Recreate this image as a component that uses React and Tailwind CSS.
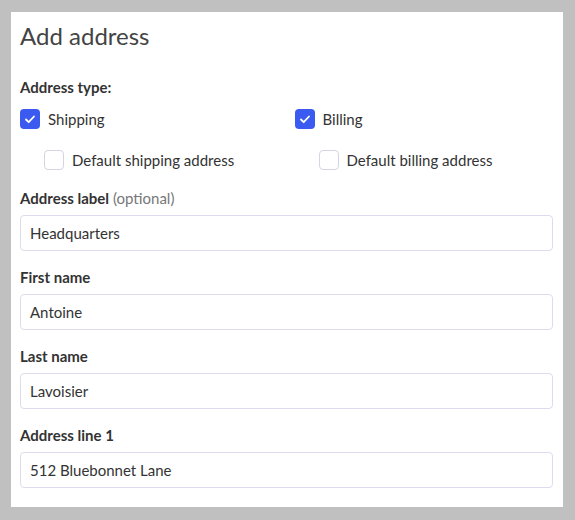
export default function App() {
  const Check = ({ on }) =>
    on ? (
      <span className="w-5 h-5 rounded-[4px] bg-[#3b5bf0] flex items-center justify-center shrink-0">
        <svg width="14" height="14" viewBox="0 0 14 14"><path d="M3 7.5l2.7 2.7L11 4.5" fill="none" stroke="white" strokeWidth="1.8" strokeLinecap="round" strokeLinejoin="round"/></svg>
      </span>
    ) : (
      <span className="w-5 h-5 rounded-[4px] border border-[#d4d4e4] bg-white shrink-0" />
    );
  const Field = ({ label, opt, value }) => (
    <div className="mt-[16px] first:mt-0">
      <div className="text-[15px] font-bold text-[#333] leading-5">
        {label}
        {opt && <span className="font-normal text-[#777]"> (optional)</span>}
      </div>
      <div className="mt-[7px] h-[36px] border border-[#dcdcee] rounded-[4px] flex items-center px-[9px] text-[15px] text-[#333]">
        {value}
      </div>
    </div>
  );
  return (
    <div className="w-[575px] h-[520px] bg-[#c0c0c0] pt-[12px] pl-[11px]" style={{ fontFamily: "Lato, 'Open Sans', sans-serif" }}>
      <div className="w-[552px] h-[495px] bg-white pl-[9px] pr-[10px] pt-[10px]">
        <div className="text-[24px] text-[#444] leading-7">Add address</div>
        <div className="mt-[27px] text-[15px] font-bold text-[#333] leading-5">Address type:</div>
        <div className="mt-[11px] grid grid-cols-2 text-[15px] text-[#333]">
          <div className="flex items-center gap-[8px]"><Check on />Shipping</div>
          <div className="flex items-center gap-[8px] pl-[8px]"><Check on />Billing</div>
          <div className="flex items-center gap-[8px] pl-[24px] mt-[18px]"><Check />Default shipping address</div>
          <div className="flex items-center gap-[8px] pl-[32px] mt-[18px]"><Check />Default billing address</div>
        </div>
        <div className="mt-[17px]">
          <Field label="Address label" opt value="Headquarters" />
          <Field label="First name" value="Antoine" />
          <Field label="Last name" value="Lavoisier" />
          <Field label="Address line 1" value="512 Bluebonnet Lane" />
        </div>
      </div>
    </div>
  );
}
